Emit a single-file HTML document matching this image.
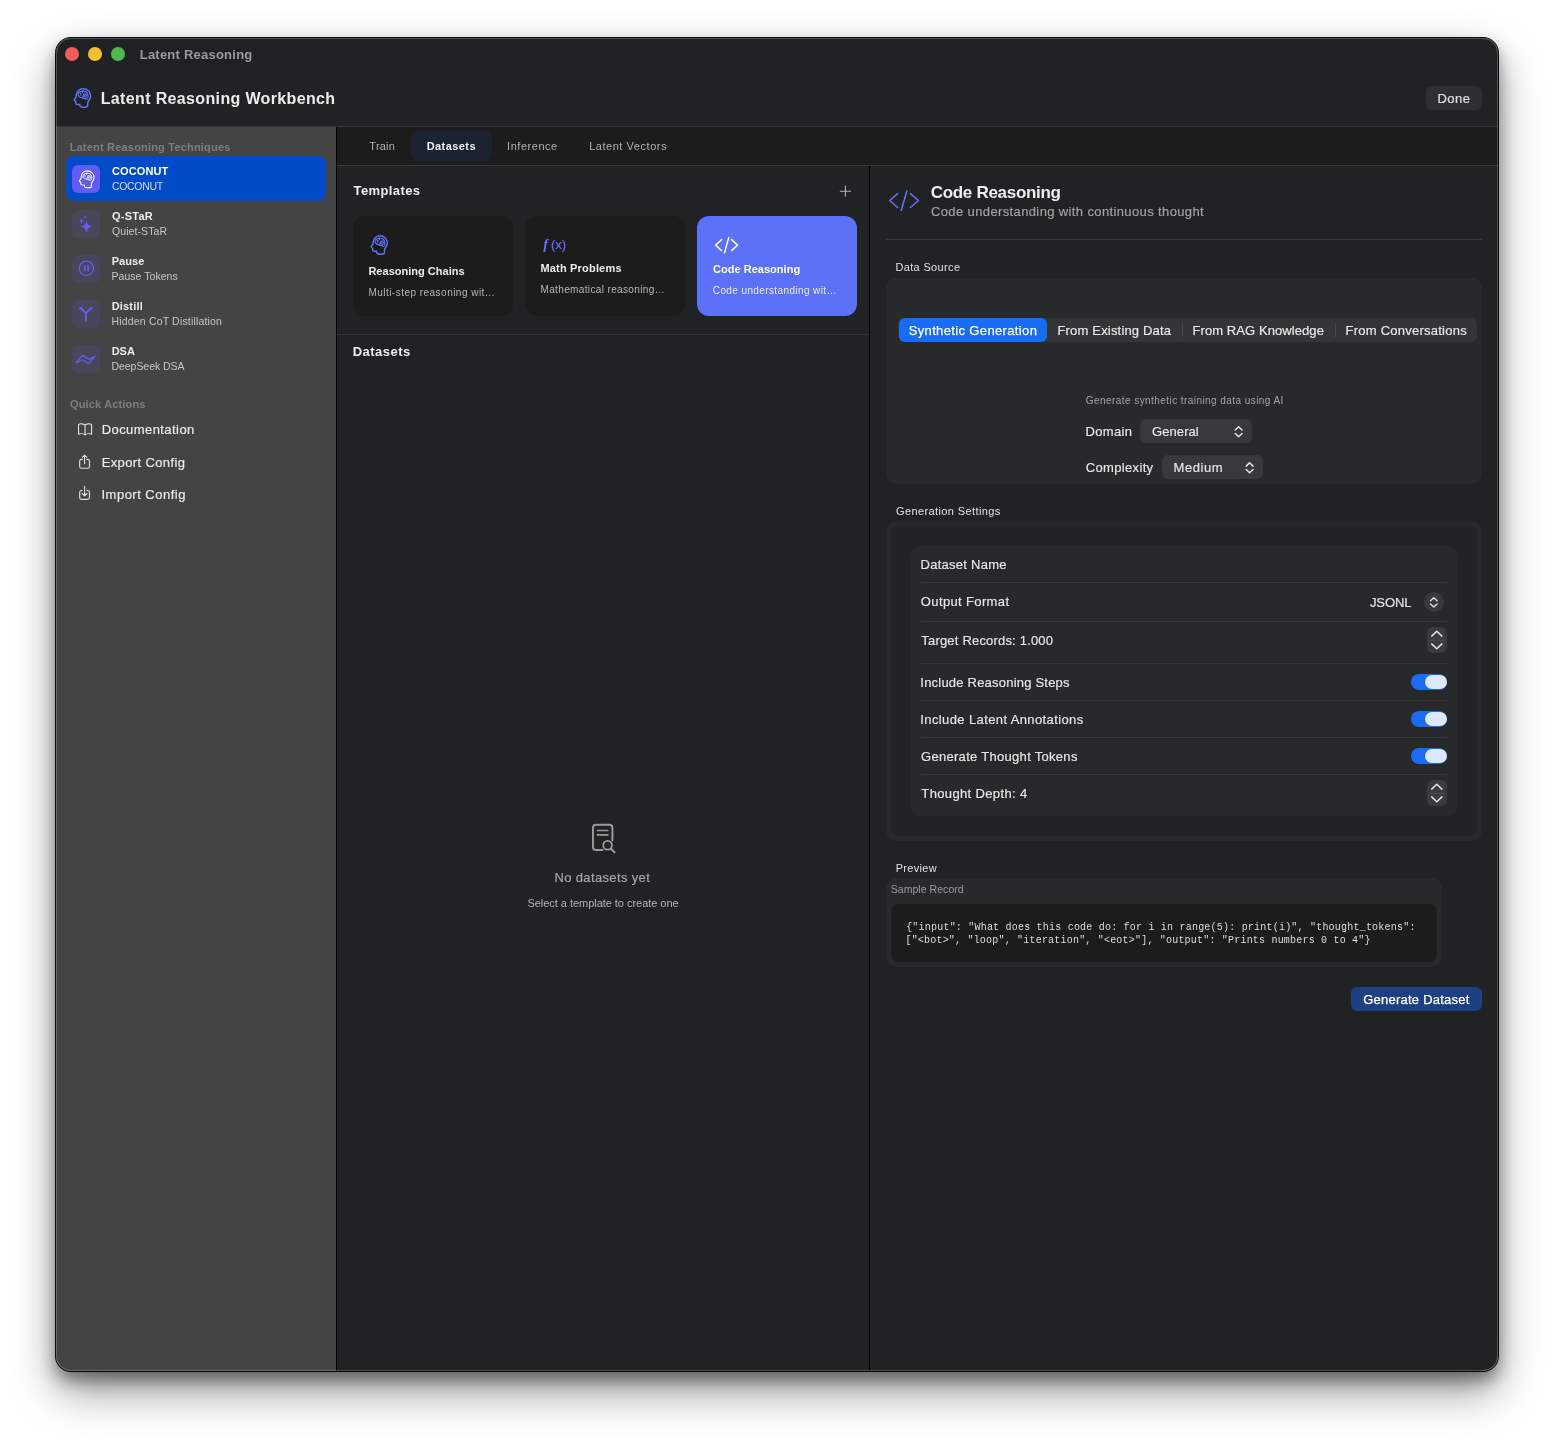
<!DOCTYPE html>
<html lang="en">
<head>
<meta charset="utf-8">
<title>Latent Reasoning</title>
<style>
*{box-sizing:border-box;margin:0;padding:0}
html,body{width:1554px;height:1445px;background:#fff;overflow:hidden}
body{font-family:"Liberation Sans",sans-serif;color:#e6e6e6;position:relative}
#shadow{position:absolute;left:56px;top:38px;width:1442px;height:1333px;border-radius:15px;
 box-shadow:0 0 0 1px rgba(0,0,0,.95),0 20px 44px rgba(0,0,0,.42),0 9px 16px rgba(0,0,0,.40)}
#win{position:absolute;left:56px;top:38px;width:1442px;height:1333px;border-radius:15px;background:#212224;overflow:hidden}
#rim{position:absolute;left:56px;top:38px;width:1442px;height:1333px;border-radius:15px;border:1px solid rgba(255,255,255,.21);pointer-events:none}
/* everything inside is positioned in page coordinates via #c */
#c{position:absolute;left:-56px;top:-38px;width:1554px;height:1445px;will-change:transform}
.a{position:absolute}
.t{position:absolute;white-space:nowrap;height:20px;line-height:20px}
.hl{position:absolute;height:1px;background:#38393b}
.ib{position:absolute;width:28px;height:28px;border-radius:6px;background:#47465b}
.card{position:absolute;top:216px;width:160px;height:100px;border-radius:12px;background:#1c1c1d}
.grp{position:absolute;background:#28292b;border-radius:10px}
.row{position:absolute;left:921px;width:526px;height:1px;background:#37383a}
.tog{position:absolute;left:1411px;width:36px;height:16px;border-radius:8px;background:#1b6cf5}
.tog i{position:absolute;right:0.5px;top:1px;width:22px;height:14px;border-radius:7px;background:#dbe8fd;box-shadow:0 0 1px rgba(0,0,0,.25)}
.step{position:absolute;left:1427px;width:20px;height:26px;border-radius:6px;background:#3a3b3d}
.pop{position:absolute;border-radius:6px;background:#38393b}
svg{position:absolute;overflow:visible}
</style>
</head>
<body>
<div id="shadow"></div>
<div id="win"><div id="c">

<!-- title bar -->
<div class="a" style="left:56px;top:38px;width:1442px;height:32px;background:#202124"></div>
<div class="a" style="left:65px;top:47px;width:14px;height:14px;border-radius:50%;background:#f25d57"></div>
<div class="a" style="left:88px;top:47px;width:14px;height:14px;border-radius:50%;background:#f6bf2f"></div>
<div class="a" style="left:111px;top:47px;width:14px;height:14px;border-radius:50%;background:#4cb950"></div>

<div class="a" style="left:56px;top:69px;width:1442px;height:1px;background:#1e1f21"></div>
<!-- header -->
<div class="a" style="left:1426px;top:86px;width:56px;height:24px;border-radius:6px;background:#2e2f31"></div>
<div class="hl" style="left:56px;top:126px;width:1442px"></div>

<!-- sidebar -->
<div class="a" style="left:56px;top:127px;width:280px;height:1244px;background:#444444"></div>
<div class="a" style="left:336px;top:127px;width:1px;height:1244px;background:#000"></div>
<div class="a" style="left:66px;top:156px;width:260px;height:44.5px;border-radius:8px;background:#014ac8"></div>
<div class="ib" style="left:72px;top:165px;background:#625af5"></div>
<div class="ib" style="left:72px;top:210px"></div>
<div class="ib" style="left:72px;top:255px"></div>
<div class="ib" style="left:72px;top:300px"></div>
<div class="ib" style="left:72px;top:345px"></div>
<svg width="1554" height="1445" viewBox="0 0 1554 1445" style="left:0;top:0"><g transform="translate(73.85 88) scale(1.0)" fill="none" stroke="#6072f8" stroke-linecap="round" stroke-linejoin="round"><path stroke-width="1.45" d="M9.1 .65C13.6 .65 16.7 4 16.7 8C16.7 10.5 15.6 12 14.5 13.2C13.9 14 13.8 15 13.8 16V17.6C13.8 18.8 11.8 19.4 10 19.4C8 19.4 6.4 18.9 6.1 17.6L5.9 16.4H3.6C2.5 16.4 1.9 15.8 1.9 14.8V13.3L.7 12.5C.3 12.2 .3 11.7 .6 11.3L2.2 9.2C2.2 4.5 4.6 .65 9.1 .65Z"/><g transform="translate(0 .35)"><path stroke-width="1.16" d="M4.5 7.2C4 5.2 5 3.7 6.6 3.3C8 2.6 9.6 2.7 10.6 3.1C12.4 3.3 13.6 4.6 13.9 6.2C14.3 7.6 14.2 9.4 13.6 10.4C13 11.2 11.8 11 11.2 10.2C10 10.2 9 9.8 8.4 9.4C7.2 9.4 5.2 8.8 4.5 7.2Z"/><path stroke-width="1.09" d="M8.7 2.9V4.3M6.1 4.9C7.4 4.7 7.8 6.3 6.5 6.8M8.5 9.3L10.3 5.5M10 8.6L12.1 5.3M11.4 10L13 6.6"/></g></g><g transform="translate(79.0 170.3) scale(0.9)" fill="none" stroke="#ffffff" stroke-linecap="round" stroke-linejoin="round"><path stroke-width="1.25" d="M9.1 .65C13.6 .65 16.7 4 16.7 8C16.7 10.5 15.6 12 14.5 13.2C13.9 14 13.8 15 13.8 16V17.6C13.8 18.8 11.8 19.4 10 19.4C8 19.4 6.4 18.9 6.1 17.6L5.9 16.4H3.6C2.5 16.4 1.9 15.8 1.9 14.8V13.3L.7 12.5C.3 12.2 .3 11.7 .6 11.3L2.2 9.2C2.2 4.5 4.6 .65 9.1 .65Z"/><g transform="translate(0 .35)"><path stroke-width="1.00" d="M4.5 7.2C4 5.2 5 3.7 6.6 3.3C8 2.6 9.6 2.7 10.6 3.1C12.4 3.3 13.6 4.6 13.9 6.2C14.3 7.6 14.2 9.4 13.6 10.4C13 11.2 11.8 11 11.2 10.2C10 10.2 9 9.8 8.4 9.4C7.2 9.4 5.2 8.8 4.5 7.2Z"/><path stroke-width="0.94" d="M8.7 2.9V4.3M6.1 4.9C7.4 4.7 7.8 6.3 6.5 6.8M8.5 9.3L10.3 5.5M10 8.6L12.1 5.3M11.4 10L13 6.6"/></g></g><path fill="#625ef2" d="M86.5 220.4Q87.22 225.68 92.5 226.4Q87.22 227.12 86.5 232.4Q85.78 227.12 80.5 226.4Q85.78 225.68 86.5 220.4ZM81.6 218.29999999999998Q81.93599999999999 220.76399999999998 84.39999999999999 221.1Q81.93599999999999 221.436 81.6 223.9Q81.264 221.436 78.8 221.1Q81.264 220.76399999999998 81.6 218.29999999999998ZM85.3 215.20000000000002Q85.50399999999999 216.696 87.0 216.9Q85.50399999999999 217.104 85.3 218.6Q85.096 217.104 83.6 216.9Q85.096 216.696 85.3 215.20000000000002Z"/><circle cx="86.4" cy="268.3" r="7.1" fill="none" stroke="#625ef2" stroke-width="1.25"/><path stroke="#625ef2" stroke-width="1.6" stroke-linecap="round" d="M84.75 265.9V270.7M88.1 265.9V270.7"/><path fill="none" stroke="#625ef2" stroke-width="1.9" stroke-linecap="round" stroke-linejoin="round" d="M85.9 320.6V313.2L81.3 308.8M85.9 313.2L90.4 308.8"/><path fill="#625ef2" d="M79.4 307.1H82.7L79.4 310.4ZM92.3 307.1H89L92.3 310.4Z"/><path fill="none" stroke="#625ef2" stroke-width="1.25" stroke-linecap="round" stroke-linejoin="round" d="M76.2 362.7L82.2 355.4L89.3 359.4L95 356L89 363.7L82.2 359.8Z"/><path fill="none" stroke="#e2e2e2" stroke-width="1.1" stroke-linejoin="round" d="M85.05 425C83.4 423.6 80.2 423.5 78.55 424.4V434.2C80.2 433.4 83.4 433.5 85.05 434.9C86.7 433.5 89.9 433.4 91.55 434.2V424.4C89.9 423.5 86.7 423.6 85.05 425ZM85.05 425V434.9"/><path fill="none" stroke="#e2e2e2" stroke-width="1.1" stroke-linecap="round" stroke-linejoin="round" d="M82.3 459.4H81.6C80.4 459.4 79.7 460.1 79.7 461.3V466.4C79.7 467.6 80.4 468.3 81.6 468.3H87.6C88.8 468.3 89.5 467.6 89.5 466.4V461.3C89.5 460.1 88.8 459.4 87.6 459.4H86.9M84.6 463.8V455.3M82.4 457.4L84.6 455.2L86.8 457.4"/><path fill="none" stroke="#e2e2e2" stroke-width="1.1" stroke-linecap="round" stroke-linejoin="round" d="M82.3 490.5H81.6C80.4 490.5 79.7 491.2 79.7 492.4V497.5C79.7 498.7 80.4 499.4 81.6 499.4H87.6C88.8 499.4 89.5 498.7 89.5 497.5V492.4C89.5 491.2 88.8 490.5 87.6 490.5H86.9M84.6 486.4V495.6M82.2 493.5L84.6 495.9L87 493.5"/></svg>

<!-- tab bar -->
<div class="a" style="left:337px;top:127px;width:1161px;height:38px;background:#1c1c1d"></div>
<div class="hl" style="left:337px;top:165px;width:1161px"></div>
<div class="a" style="left:411px;top:131px;width:81px;height:30px;border-radius:7px;background:#1b2333"></div>

<!-- middle panel -->
<div class="a" style="left:869px;top:166px;width:1px;height:1205px;background:#000"></div>
<div class="card" style="left:353px"></div>
<div class="card" style="left:525px"></div>
<div class="card" style="left:697px;background:#5c70f8"></div>
<div class="hl" style="left:337px;top:334px;width:532px;background:#343537"></div>
<svg width="1554" height="1445" viewBox="0 0 1554 1445" style="left:0;top:0"><g transform="translate(370.8 235.1) scale(0.99)" fill="none" stroke="#6072f8" stroke-linecap="round" stroke-linejoin="round"><path stroke-width="1.45" d="M9.1 .65C13.6 .65 16.7 4 16.7 8C16.7 10.5 15.6 12 14.5 13.2C13.9 14 13.8 15 13.8 16V17.6C13.8 18.8 11.8 19.4 10 19.4C8 19.4 6.4 18.9 6.1 17.6L5.9 16.4H3.6C2.5 16.4 1.9 15.8 1.9 14.8V13.3L.7 12.5C.3 12.2 .3 11.7 .6 11.3L2.2 9.2C2.2 4.5 4.6 .65 9.1 .65Z"/><g transform="translate(0 .35)"><path stroke-width="1.16" d="M4.5 7.2C4 5.2 5 3.7 6.6 3.3C8 2.6 9.6 2.7 10.6 3.1C12.4 3.3 13.6 4.6 13.9 6.2C14.3 7.6 14.2 9.4 13.6 10.4C13 11.2 11.8 11 11.2 10.2C10 10.2 9 9.8 8.4 9.4C7.2 9.4 5.2 8.8 4.5 7.2Z"/><path stroke-width="1.09" d="M8.7 2.9V4.3M6.1 4.9C7.4 4.7 7.8 6.3 6.5 6.8M8.5 9.3L10.3 5.5M10 8.6L12.1 5.3M11.4 10L13 6.6"/></g></g><path fill="none" stroke="#fff" stroke-width="1.45" stroke-linecap="round" stroke-linejoin="round" d="M721.6 239.6L715.6 245.1L721.6 250.6M728.8 237.6L724.5 252.7M731.6 239.6L737.5 245.1L731.6 250.6"/><path stroke="#b4b4b4" stroke-width="1.1" stroke-linecap="round" d="M840.3 191.2H850.5M845.4 186.1V196.3"/><path fill="none" stroke="#9c9c9c" stroke-width="1.9" stroke-linecap="round" stroke-linejoin="round" d="M602.6 850H596C594 850 593 849 593 847V827.8C593 825.8 594 824.8 596 824.8H609.4C611.4 824.8 612.4 825.8 612.4 827.8V840.6"/><path stroke="#9c9c9c" stroke-width="1.7" stroke-linecap="round" d="M597.4 830.5H607.8M597.4 834.8H607.8"/><circle cx="607.6" cy="845.2" r="4.4" fill="none" stroke="#9c9c9c" stroke-width="1.8"/><path stroke="#9c9c9c" stroke-width="2" stroke-linecap="round" d="M611 848.8L614.5 852.3"/></svg>
<div class="t" style="left:543.2px;top:234px;font-size:14.5px;color:#6072f8;font-style:italic;font-weight:bold;font-family:'Liberation Serif',serif">f</div><div class="t" style="left:551px;top:235px;font-size:13px;color:#6072f8;-webkit-text-stroke:.2px #6072f8">(x)</div>

<!-- right panel -->
<div class="hl" style="left:886px;top:239px;width:596px;background:#38393b"></div>
<div class="grp" style="left:886px;top:277.5px;width:596px;height:206px"></div>
<div class="a" style="left:898px;top:318px;width:579px;height:24px;border-radius:6px;background:#343537"></div>
<div class="a" style="left:899px;top:318px;width:148px;height:24px;border-radius:6px;background:#186bf5"></div>
<div class="a" style="left:1182px;top:323px;width:1px;height:14px;background:#48494b"></div>
<div class="a" style="left:1335px;top:323px;width:1px;height:14px;background:#48494b"></div>
<div class="pop" style="left:1140px;top:419.2px;width:112px;height:23.6px"></div>
<div class="pop" style="left:1162px;top:455.2px;width:101px;height:23.6px"></div>

<div class="grp" style="left:886px;top:521.5px;width:596px;height:319px"></div>
<div class="a" style="left:891px;top:526px;width:586px;height:310px;border-radius:6px;background:#222325"></div>
<div class="grp" style="left:911px;top:546px;width:546px;height:270px"></div>
<div class="row" style="top:582px"></div>
<div class="row" style="top:621px"></div>
<div class="row" style="top:663px"></div>
<div class="row" style="top:700px"></div>
<div class="row" style="top:737px"></div>
<div class="row" style="top:774px"></div>
<div class="a" style="left:1424px;top:592px;width:20px;height:20px;border-radius:50%;background:#38393b"></div>
<div class="step" style="top:627px"></div>
<div class="step" style="top:780px"></div>
<div class="tog" style="top:674px"><i></i></div>
<div class="tog" style="top:711px"><i></i></div>
<div class="tog" style="top:748px"><i></i></div>

<div class="grp" style="left:886px;top:878px;width:556px;height:88.5px"></div>
<div class="a" style="left:891px;top:904px;width:546px;height:57.5px;border-radius:8px;background:#1c1c1d"></div>
<div class="a" style="left:1351px;top:987px;width:131px;height:24px;border-radius:6px;background:#1c4081"></div>
<svg width="1554" height="1445" viewBox="0 0 1554 1445" style="left:0;top:0"><path fill="none" stroke="#6074fa" stroke-width="1.6" stroke-linecap="round" stroke-linejoin="round" d="M897.6 193.6L889.7 200.5L897.6 207.5M906.9 190.9L901.3 210.2M910.4 193.6L918.5 200.5L910.4 207.5"/><path fill="none" stroke="#e4e4e4" stroke-width="1.5" stroke-linecap="round" stroke-linejoin="round" d="M1235.1999999999998 430.05L1238.6 426.75L1242.0 430.05M1235.1999999999998 433.45L1238.6 436.75L1242.0 433.45"/><path fill="none" stroke="#e4e4e4" stroke-width="1.5" stroke-linecap="round" stroke-linejoin="round" d="M1246.1999999999998 466.1L1249.6 462.8L1253.0 466.1M1246.1999999999998 469.5L1249.6 472.8L1253.0 469.5"/><path fill="none" stroke="#e4e4e4" stroke-width="1.4" stroke-linecap="round" stroke-linejoin="round" d="M1430.5 600.6999999999999L1433.8 597.6999999999999L1437.1 600.6999999999999M1430.5 603.9L1433.8 606.9L1437.1 603.9"/><path fill="none" stroke="#e4e4e4" stroke-width="1.5" stroke-linecap="round" stroke-linejoin="round" d="M1431.7 636.1L1436.8 631.3000000000001L1441.9 636.1M1431.7 643.9000000000001L1436.8 648.8000000000001L1441.9 643.9000000000001"/><path stroke="#4d4e50" stroke-width="1" d="M1430 640.3H1444"/><path fill="none" stroke="#e4e4e4" stroke-width="1.5" stroke-linecap="round" stroke-linejoin="round" d="M1431.7 789.1L1436.8 784.3000000000001L1441.9 789.1M1431.7 796.9000000000001L1436.8 801.8000000000001L1441.9 796.9000000000001"/><path stroke="#4d4e50" stroke-width="1" d="M1430 793.3H1444"/></svg>

<div class="t" style="left:139.73px;top:45px;font-size:13px;color:#9b9b9c;font-weight:bold;letter-spacing:0.231px;">Latent Reasoning</div>
<div class="t" style="left:100.72px;top:89px;font-size:16px;color:#ededed;font-weight:bold;letter-spacing:0.355px;">Latent Reasoning Workbench</div>
<div class="t" style="left:1437.50px;top:89px;font-size:13px;color:#e0e0e0;letter-spacing:0.460px;-webkit-text-stroke:.18px;">Done</div>
<div class="t" style="left:69.65px;top:137px;font-size:11px;color:#7e7e7e;font-weight:bold;letter-spacing:0.194px;">Latent Reasoning Techniques</div>
<div class="t" style="left:112.04px;top:161px;font-size:11px;color:#ffffff;font-weight:bold;letter-spacing:0.116px;">COCONUT</div>
<div class="t" style="left:111.97px;top:176px;font-size:10.5px;color:#d3dcf5;letter-spacing:-0.324px;">COCONUT</div>
<div class="t" style="left:112.04px;top:206px;font-size:11px;color:#ebebeb;font-weight:bold;letter-spacing:0.244px;">Q-STaR</div>
<div class="t" style="left:111.98px;top:221px;font-size:10.5px;color:#c6c6c6;letter-spacing:0.084px;">Quiet-STaR</div>
<div class="t" style="left:111.65px;top:251px;font-size:11px;color:#ebebeb;font-weight:bold;letter-spacing:0.102px;">Pause</div>
<div class="t" style="left:111.51px;top:266px;font-size:10.5px;color:#c6c6c6;letter-spacing:0.039px;">Pause Tokens</div>
<div class="t" style="left:111.65px;top:296px;font-size:11px;color:#ebebeb;font-weight:bold;letter-spacing:0.184px;">Distill</div>
<div class="t" style="left:111.51px;top:311px;font-size:10.5px;color:#c6c6c6;letter-spacing:0.170px;">Hidden CoT Distillation</div>
<div class="t" style="left:111.65px;top:341px;font-size:11px;color:#ebebeb;font-weight:bold;letter-spacing:-0.006px;">DSA</div>
<div class="t" style="left:111.51px;top:356px;font-size:10.5px;color:#c6c6c6;letter-spacing:-0.053px;">DeepSeek DSA</div>
<div class="t" style="left:70.04px;top:394px;font-size:11px;color:#7e7e7e;font-weight:bold;letter-spacing:0.153px;">Quick Actions</div>
<div class="t" style="left:101.67px;top:420px;font-size:13px;color:#ebebeb;letter-spacing:0.432px;-webkit-text-stroke:.18px;">Documentation</div>
<div class="t" style="left:101.67px;top:453px;font-size:13px;color:#ebebeb;letter-spacing:0.377px;-webkit-text-stroke:.18px;">Export Config</div>
<div class="t" style="left:101.52px;top:485px;font-size:13px;color:#ebebeb;letter-spacing:0.484px;-webkit-text-stroke:.18px;">Import Config</div>
<div class="t" style="left:369.37px;top:136px;font-size:11px;color:#b2b2b2;letter-spacing:0.214px;">Train</div>
<div class="t" style="left:426.64px;top:136px;font-size:11px;color:#f2f2f2;font-weight:bold;letter-spacing:0.439px;">Datasets</div>
<div class="t" style="left:507.05px;top:136px;font-size:11px;color:#b2b2b2;letter-spacing:0.541px;">Inference</div>
<div class="t" style="left:589.14px;top:136px;font-size:11px;color:#b2b2b2;letter-spacing:0.543px;">Latent Vectors</div>
<div class="t" style="left:353.53px;top:181px;font-size:13px;color:#ededed;font-weight:bold;letter-spacing:0.397px;">Templates</div>
<div class="t" style="left:368.41px;top:261px;font-size:11px;color:#ededed;font-weight:bold;letter-spacing:0.015px;">Reasoning Chains</div>
<div class="t" style="left:368.38px;top:283px;font-size:10px;color:#b6b6b6;letter-spacing:0.476px;">Multi-step reasoning wit…</div>
<div class="t" style="left:540.46px;top:258px;font-size:11px;color:#ededed;font-weight:bold;letter-spacing:0.184px;">Math Problems</div>
<div class="t" style="left:540.44px;top:280px;font-size:10px;color:#b6b6b6;letter-spacing:0.366px;">Mathematical reasoning…</div>
<div class="t" style="left:712.99px;top:259px;font-size:11px;color:#ffffff;font-weight:bold;letter-spacing:0.027px;">Code Reasoning</div>
<div class="t" style="left:712.79px;top:281px;font-size:10px;color:#e8ebff;letter-spacing:0.392px;">Code understanding wit…</div>
<div class="t" style="left:352.73px;top:342px;font-size:13px;color:#ededed;font-weight:bold;letter-spacing:0.479px;">Datasets</div>
<div class="t" style="left:554.50px;top:868px;font-size:13px;color:#a6a6a6;letter-spacing:0.352px;-webkit-text-stroke:.18px;">No datasets yet</div>
<div class="t" style="left:527.42px;top:893px;font-size:11px;color:#b4b4b4;letter-spacing:-0.034px;">Select a template to create one</div>
<div class="t" style="left:930.65px;top:183px;font-size:17px;color:#eeeeee;font-weight:bold;letter-spacing:-0.290px;">Code Reasoning</div>
<div class="t" style="left:931.00px;top:202px;font-size:13px;color:#a2a2a2;letter-spacing:0.375px;-webkit-text-stroke:.18px;">Code understanding with continuous thought</div>
<div class="t" style="left:895.42px;top:257px;font-size:11px;color:#e2e2e2;letter-spacing:0.345px;">Data Source</div>
<div class="t" style="left:908.66px;top:321px;font-size:13px;color:#ffffff;letter-spacing:0.358px;-webkit-text-stroke:0.25px #fff;">Synthetic Generation</div>
<div class="t" style="left:1057.49px;top:321px;font-size:13px;color:#e8e8e8;letter-spacing:0.178px;-webkit-text-stroke:.18px;">From Existing Data</div>
<div class="t" style="left:1192.49px;top:321px;font-size:13px;color:#e8e8e8;letter-spacing:0.079px;-webkit-text-stroke:.18px;">From RAG Knowledge</div>
<div class="t" style="left:1345.50px;top:321px;font-size:13px;color:#e8e8e8;letter-spacing:0.243px;-webkit-text-stroke:.18px;">From Conversations</div>
<div class="t" style="left:1085.81px;top:391px;font-size:10px;color:#a4a4a4;letter-spacing:0.437px;">Generate synthetic training data using AI</div>
<div class="t" style="left:1085.48px;top:422px;font-size:13px;color:#e6e6e6;letter-spacing:0.337px;-webkit-text-stroke:.18px;">Domain</div>
<div class="t" style="left:1151.98px;top:422px;font-size:13px;color:#e6e6e6;letter-spacing:0.090px;-webkit-text-stroke:.18px;">General</div>
<div class="t" style="left:1085.80px;top:458px;font-size:13px;color:#e6e6e6;letter-spacing:0.332px;-webkit-text-stroke:.18px;">Complexity</div>
<div class="t" style="left:1173.50px;top:458px;font-size:13px;color:#e6e6e6;letter-spacing:0.588px;-webkit-text-stroke:.18px;">Medium</div>
<div class="t" style="left:895.97px;top:501px;font-size:11px;color:#e2e2e2;letter-spacing:0.393px;">Generation Settings</div>
<div class="t" style="left:920.50px;top:555px;font-size:13px;color:#e6e6e6;letter-spacing:0.273px;-webkit-text-stroke:.18px;">Dataset Name</div>
<div class="t" style="left:920.87px;top:592px;font-size:13px;color:#e6e6e6;letter-spacing:0.362px;-webkit-text-stroke:.18px;">Output Format</div>
<div class="t" style="left:1369.88px;top:593px;font-size:13px;color:#e6e6e6;letter-spacing:-0.068px;-webkit-text-stroke:.18px;">JSONL</div>
<div class="t" style="left:921.33px;top:631px;font-size:13px;color:#e6e6e6;letter-spacing:0.188px;-webkit-text-stroke:.18px;">Target Records: 1.000</div>
<div class="t" style="left:920.33px;top:673px;font-size:13px;color:#e6e6e6;letter-spacing:0.213px;-webkit-text-stroke:.18px;">Include Reasoning Steps</div>
<div class="t" style="left:920.33px;top:710px;font-size:13px;color:#e6e6e6;letter-spacing:0.384px;-webkit-text-stroke:.18px;">Include Latent Annotations</div>
<div class="t" style="left:921.00px;top:747px;font-size:13px;color:#e6e6e6;letter-spacing:0.297px;-webkit-text-stroke:.18px;">Generate Thought Tokens</div>
<div class="t" style="left:921.33px;top:784px;font-size:13px;color:#e6e6e6;letter-spacing:0.358px;-webkit-text-stroke:.18px;">Thought Depth: 4</div>
<div class="t" style="left:895.63px;top:858px;font-size:11px;color:#e2e2e2;letter-spacing:0.312px;">Preview</div>
<div class="t" style="left:890.71px;top:879px;font-size:10.5px;color:#9c9c9c;letter-spacing:0.053px;">Sample Record</div>
<div class="t" style="left:906.15px;top:918px;font-size:10px;color:#dedede;font-family:'Liberation Mono',monospace;letter-spacing:0.212px;">{"input": "What does this code do: for i in range(5): print(i)", "thought_tokens":</div>
<div class="t" style="left:905.43px;top:931px;font-size:10px;color:#dedede;font-family:'Liberation Mono',monospace;letter-spacing:0.203px;">["&lt;bot&gt;", "loop", "iteration", "&lt;eot&gt;"], "output": "Prints numbers 0 to 4"}</div>
<div class="t" style="left:1363.25px;top:990px;font-size:13px;color:#ffffff;letter-spacing:0.230px;-webkit-text-stroke:0.25px #fff;">Generate Dataset</div>
</div></div>
<div id="rim"></div>
</body>
</html>
